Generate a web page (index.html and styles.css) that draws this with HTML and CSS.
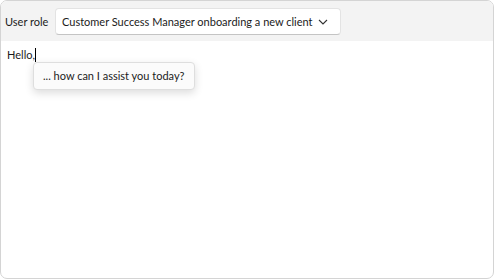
FILE: index.html
```html
<!DOCTYPE html>
<html lang="en">
<head>
    <meta charset="UTF-8">
    <title>User role prompt</title>
    <link rel="stylesheet" href="styles.css">
</head>
<body>
    <div class="frame">
        <div class="toolbar">
            <span class="role-label">User role</span>
            <div class="role-select">
                <span class="role-value">Customer Success Manager onboarding a new client</span>
                <svg class="chevron" width="10" height="6" viewBox="0 0 10 6">
                    <path d="M1 1 L5 5 L9 1" fill="none" stroke="#333" stroke-width="1.1"/>
                </svg>
            </div>
        </div>
        <div class="editor">
            <div class="line">Hello,<span class="caret"></span></div>
            <div class="suggestion">... how can I assist you today?</div>
        </div>
    </div>
</body>
</html>
```

FILE: styles.css
```css
html, body {
    margin: 0;
    padding: 0;
    background: #ffffff;
}

body {
    font-family: Lato, "Noto Sans", sans-serif;
    font-size: 11px;
    color: #1b1b1b;
}

.frame {
    width: 494px;
    height: 279px;
    box-sizing: border-box;
    border: 1px solid #d4d4d4;
    border-radius: 7px;
    overflow: hidden;
    display: flex;
    flex-direction: column;
}

.toolbar {
    background-color: #f3f3f3;
    height: 40px;
    display: flex;
    align-items: center;
    padding: 0 0 0 4px;
    flex-shrink: 0;
}

.role-label {
    width: 50px;
    flex-shrink: 0;
}

.role-select {
    display: flex;
    align-items: center;
    justify-content: space-between;
    width: 286px;
    height: 27px;
    box-sizing: border-box;
    padding: 0 12px 0 6px;
    background: #ffffff;
    border: 1px solid #e3e3e3;
    border-bottom-color: #c4c4c4;
    border-radius: 4px;
    margin-top: 1px;
    white-space: nowrap;
    flex-shrink: 0;
}

.chevron {
    flex-shrink: 0;
}

.editor {
    flex: 1;
    position: relative;
    padding: 6px 6px;
}

.line {
    line-height: 16px;
}

.caret {
    display: inline-block;
    width: 1px;
    height: 14px;
    background: #000;
    vertical-align: -3px;
}

.suggestion {
    position: absolute;
    left: 32px;
    top: 21px;
    padding: 0 9px;
    height: 26px;
    line-height: 25px;
    background: #fbfbfb;
    border: 1px solid #dedede;
    border-radius: 4px;
    box-shadow: 0 3px 8px rgba(0, 0, 0, 0.14);
}
```
